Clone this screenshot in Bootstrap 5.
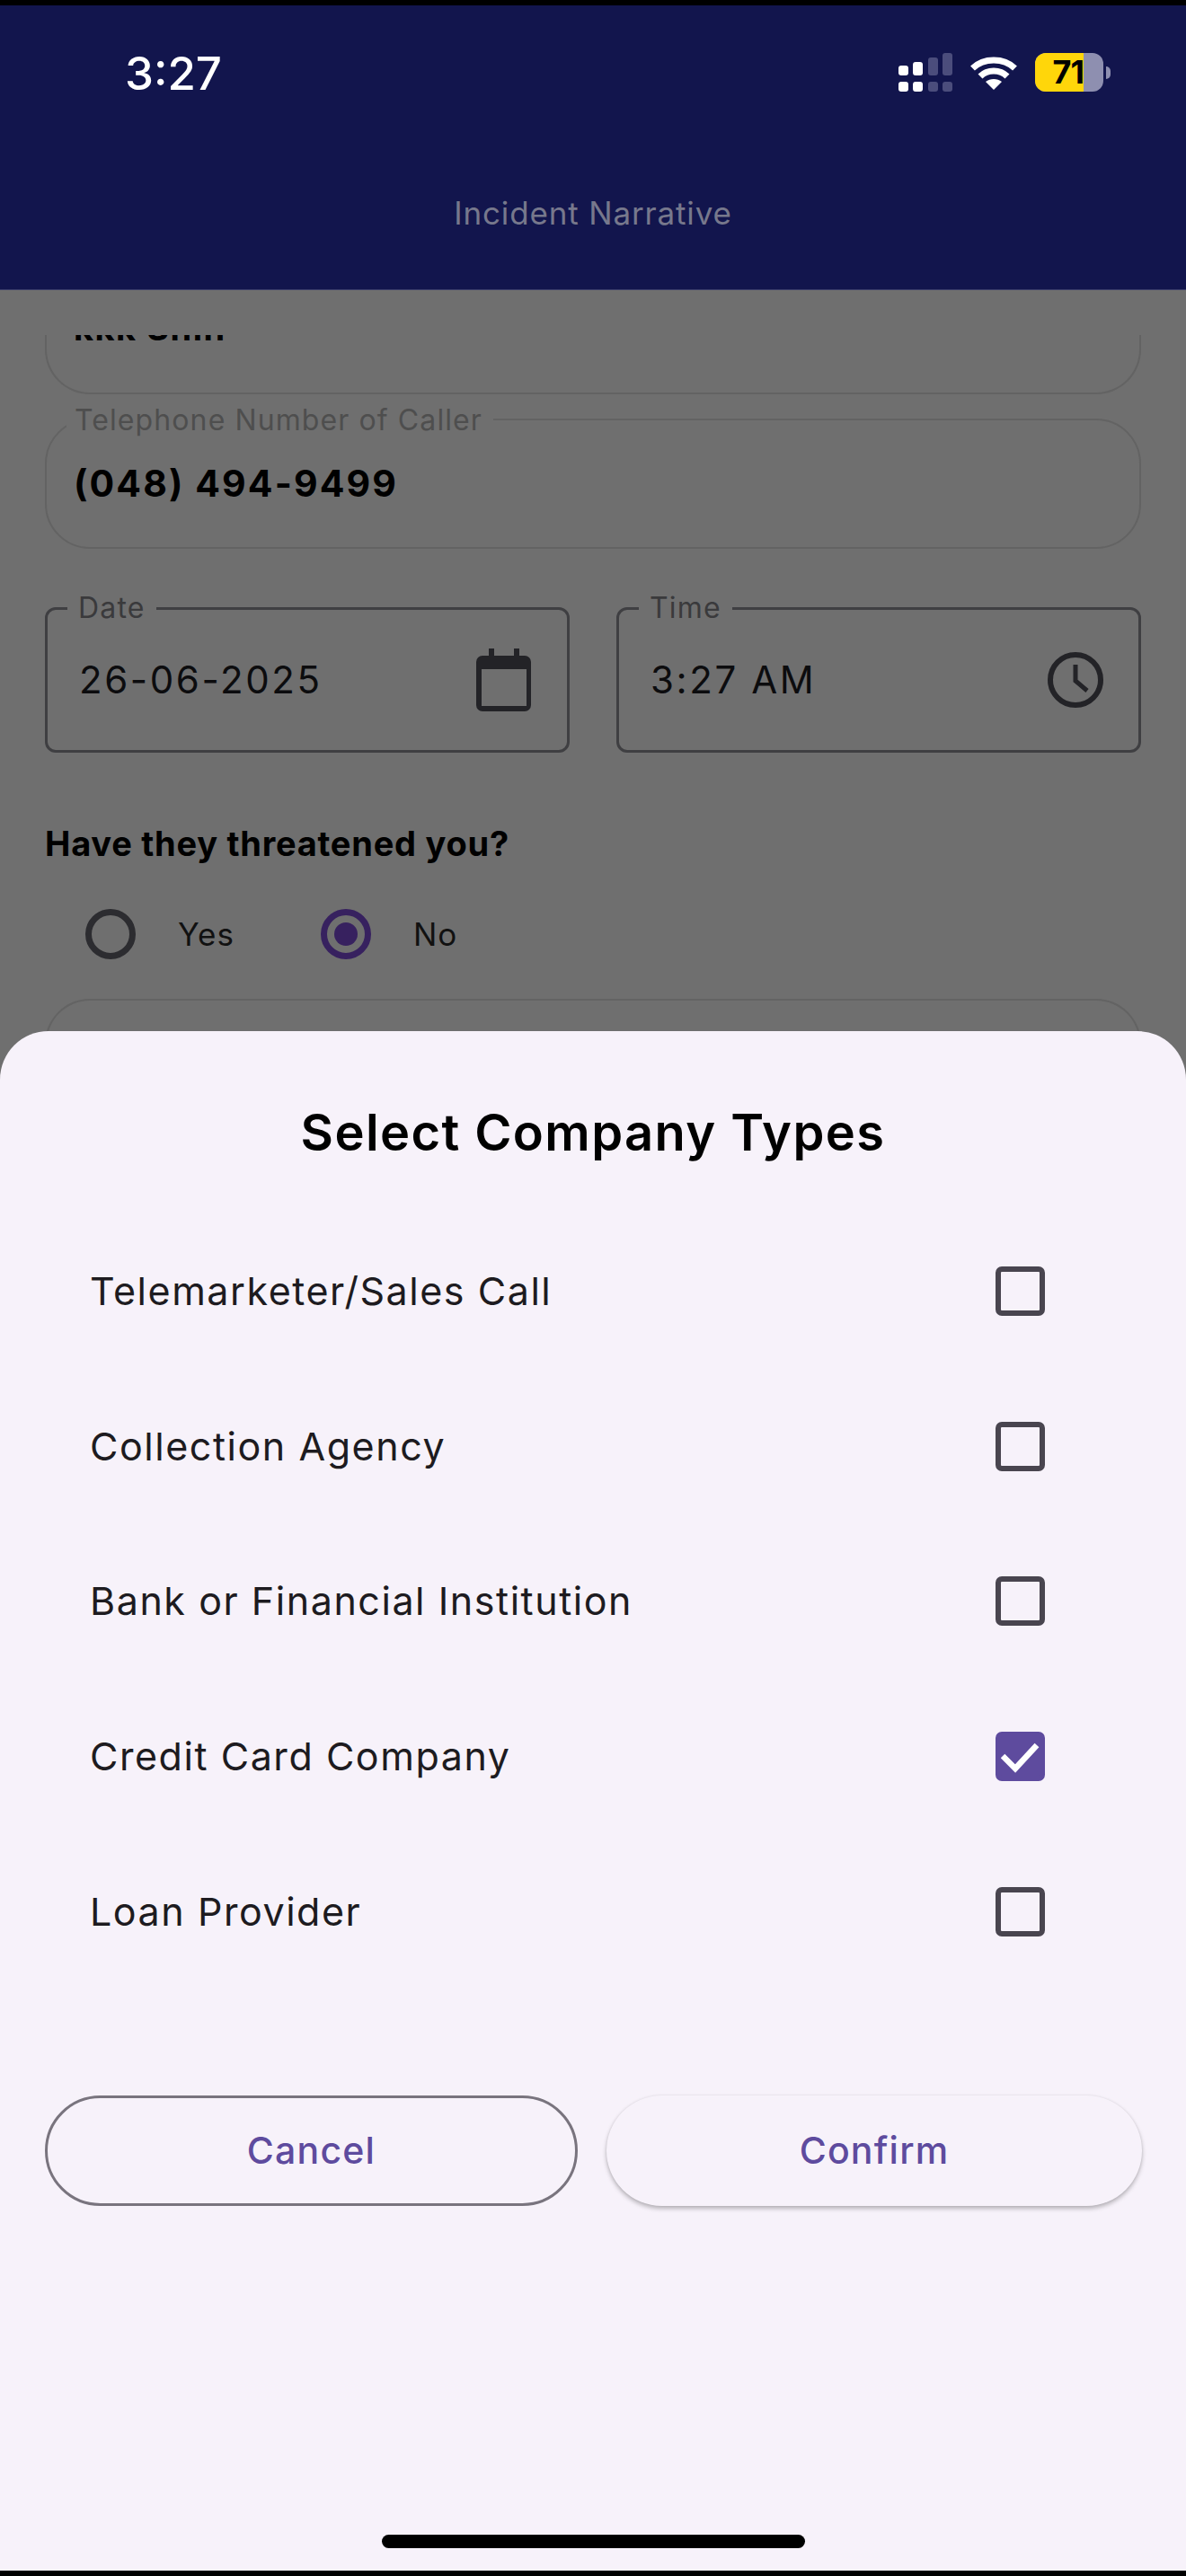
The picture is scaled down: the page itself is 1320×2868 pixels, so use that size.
<!DOCTYPE html>
<html lang="en">

<head>
    <meta charset="UTF-8">
    <meta name="viewport" content="width=device-width, initial-scale=1.0">
    <title>Incident Narrative</title>
    <link href="https://cdn.jsdelivr.net/npm/bootstrap@5.3.0/dist/css/bootstrap.min.css" rel="stylesheet">
    <style>
        html, body { margin: 0; height: 2868px; overflow: hidden; background: #000; }
        body { font-family: Inter, "Liberation Sans", sans-serif; }
        .phone { position: relative; width: 1320px; height: 2868px; background: #000; overflow: hidden; padding-top: 6px; }

        /* app bar */
        .app-head { height: 317px; background: #12154d; border-bottom: 1px solid #3a3d6b; position: relative; }
        .status-row { height: 148px; padding: 0 84px 0 139px; }
        .clock { color: #fff; font-size: 51px; font-weight: 500; line-height: 1; padding-top: 50px; }
        .status-icons { padding-top: 53px; gap: 20px; }
        .batt { width: 76px; height: 43px; border-radius: 12px; overflow: hidden; position: relative; background: #8e8fb0; }
        .batt-fill { position: absolute; left: 0; top: 0; bottom: 0; width: 54px; background: #ffd60a; }
        .batt-num { position: absolute; left: 0; width: 54px; text-align: right; top: 0; line-height: 43px; font-size: 36px; font-weight: 700; color: #000; letter-spacing: -1px; }
        .batt-tip { width: 5px; height: 14px; border-radius: 0 5px 5px 0; background: #8e8fb0; margin-left: 3px; }
        .app-title { text-align: center; color: #77788c; font-size: 35px; letter-spacing: .85px; line-height: 1; padding-top: 66px; }

        /* form behind the sheet */
        .form-area { height: 2539px; background: #6f6f6f; padding: 50px 50px 0 50px; }
        .clip-box { height: 66px; overflow: hidden; }
        .pill-field { display: flow-root; border: 2px solid #636363; border-top: 0; border-radius: 0 0 50px 50px; height: 66px; padding-left: 30px; }
        .cut-text { font-size: 38px; font-weight: 700; color: #000; line-height: 1; margin-top: -27px; letter-spacing: 1.5px; }
        .tel-field { position: relative; margin-top: 27px; height: 145px; border: 2px solid #636363; border-radius: 50px; padding: 0 30px; }
        .tel-label { position: absolute; left: 22px; top: -18px; background: #6f6f6f; padding: 0 12px 0 9px; color: #4e4e4e; font-size: 32px; line-height: 36px; letter-spacing: 1.1px; }
        .tel-value { font-size: 41px; font-weight: 700; color: #000; letter-spacing: 2.1px; line-height: 1; }
        .date-row { margin-top: 65px; gap: 52px; }
        .box-field { position: relative; flex: 1 1 0; height: 162px; border: 3px solid #3f3f42; border-radius: 12px; padding: 0 39px 0 35px; }
        .box-label { position: absolute; left: 22px; top: -20px; background: #6f6f6f; padding: 0 12px; color: #3a3a3c; font-size: 32px; line-height: 36px; letter-spacing: 1.2px; }
        .box-value { font-size: 42px; color: #0c0c0e; letter-spacing: 2.6px; line-height: 1; }
        .question { margin-top: 82px; font-size: 38px; font-weight: 700; color: #000; line-height: 1; letter-spacing: .75px; }
        .radio-row { margin-top: 54px; padding-left: 45px; height: 56px; }
        .radio-ring { width: 56px; height: 56px; border-radius: 50%; border: 7px solid #2c2c30; flex: none; }
        .radio-on { border-color: #37215f; display: flex; align-items: center; justify-content: center; }
        .radio-on i { display: block; width: 26px; height: 26px; border-radius: 50%; background: #37215f; }
        .radio-text { font-size: 35px; color: #111; letter-spacing: 1px; margin-left: 47px; line-height: 1; }
        .radio-gap { margin-left: 96px; }
        .radio-gap + .radio-text { margin-left: 47px; }
        .next-field { margin-top: 44px; height: 100px; border: 2px solid #636363; border-bottom: 0; border-radius: 50px 50px 0 0; }

        /* bottom sheet */
        .sheet { position: absolute; left: 0; right: 0; top: 1148px; bottom: 6px; background: #f7f2fa; border-radius: 54px 54px 0 0; }
        .sheet-title { margin: 0; padding-top: 83px; text-align: center; font-size: 56px; font-weight: 600; color: #000; line-height: 60px; letter-spacing: 1.4px; }
        .type-list { margin-top: 60px; padding: 0 157px 0 100px; }
        .type-row { height: 172.7px; font-size: 43px; color: #1d1b20; letter-spacing: 1.55px; }
        .tick-box { width: 55px; height: 55px; border: 6px solid #49454f; border-radius: 7px; flex: none; }
        .tick-on { background: #5e4b9e; border-color: #5e4b9e; }
        .sheet-btns { margin-top: 119px; padding: 0 49px 0 50px; gap: 32px; }
        .sheet-btn { flex: none; height: 123px; border-radius: 62px; background: #f7f2fa; color: #5e4b9e; font-size: 41px; font-weight: 500; letter-spacing: 1.2px; padding: 0; }
        .btn-line { width: 593px; border: 3px solid #79747e; }
        .btn-raise { width: 596px; border: 0; box-shadow: 0 3px 5px rgba(0, 0, 0, .26), 0 0 3px rgba(0, 0, 0, .08); }
        .home-bar { position: absolute; left: 425px; width: 471px; top: 1674px; height: 15px; border-radius: 8px; background: #000; }
    </style>
</head>

<body>
    <div class="phone">
        <!--barra superior-->
        <div class="app-head">
            <div class="status-row d-flex justify-content-between align-items-start">
                <div class="clock">3:27</div>
                <div class="status-icons d-flex align-items-center">
                    <svg width="60" height="43" viewBox="0 0 60 43">
                        <g fill="#fff">
                            <rect x="0" y="14" width="11" height="11" rx="3"/><rect x="16" y="10" width="11" height="15" rx="3"/>
                            <rect x="0" y="32" width="11" height="11" rx="3"/><rect x="16" y="32" width="11" height="11" rx="3"/>
                        </g>
                        <g fill="#4b4d7c">
                            <rect x="33" y="5" width="11" height="20" rx="3"/><rect x="49" y="0" width="11" height="25" rx="3"/>
                            <rect x="33" y="32" width="11" height="11" rx="3"/><rect x="49" y="32" width="11" height="11" rx="3"/>
                        </g>
                    </svg>
                    <svg width="52" height="38" viewBox="0 0 52 38">
                        <g fill="none" stroke="#fff" stroke-width="7">
                            <path d="M2.5 14C15 2 37 2 49.500 14"/>
                            <path d="M11 23C19 15 33 15 41 23"/>
                        </g>
                        <path d="M17 29C22 25 30 25 35 29L26 38Z" fill="#fff"/>
                    </svg>
                    <div class="d-flex align-items-center">
                        <div class="batt">
                            <div class="batt-fill"></div>
                            <div class="batt-num">71</div>
                        </div>
                        <div class="batt-tip"></div>
                    </div>
                </div>
            </div>
            <div class="app-title">Incident Narrative</div>
        </div>

        <!--formulario por tras-->
        <div class="form-area">
            <div class="clip-box">
                <div class="pill-field">
                    <div class="cut-text">kkk Shin</div>
                </div>
            </div>
            <div class="tel-field d-flex align-items-center">
                <span class="tel-label">Telephone Number of Caller</span>
                <span class="tel-value">(048) 494-9499</span>
            </div>
            <div class="date-row d-flex">
                <div class="box-field d-flex align-items-center justify-content-between">
                    <span class="box-label">Date</span>
                    <span class="box-value">26-06-2025</span>
                    <svg width="62" height="70" viewBox="0 0 62 70">
                        <path d="M14 0h6v8h22V0h6v8h6a7 7 0 0 1 7 7v48a7 7 0 0 1-7 7H7a7 7 0 0 1-7-7V15a7 7 0 0 1 7-7h7Z" fill="#232327"/>
                        <rect x="6" y="23" width="50" height="41" fill="#6f6f6f"/>
                    </svg>
                </div>
                <div class="box-field d-flex align-items-center justify-content-between">
                    <span class="box-label">Time</span>
                    <span class="box-value">3:27 AM</span>
                    <svg width="62" height="62" viewBox="0 0 62 62" fill="none" stroke="#232327">
                        <circle cx="31" cy="31" r="28" stroke-width="6"/>
                        <path d="M31 14v18l13 11" stroke-width="5"/>
                    </svg>
                </div>
            </div>
            <div class="question">Have they threatened you?</div>
            <div class="radio-row d-flex align-items-center">
                <div class="radio-ring"></div>
                <span class="radio-text">Yes</span>
                <div class="radio-ring radio-on radio-gap"><i></i></div>
                <span class="radio-text">No</span>
            </div>
            <div class="next-field"></div>
        </div>

        <!--folha de selecao-->
        <div class="sheet">
            <h2 class="sheet-title">Select Company Types</h2>
            <div class="type-list">
                <div class="type-row d-flex justify-content-between align-items-center">
                    <span>Telemarketer/Sales Call</span>
                    <div class="tick-box"></div>
                </div>
                <div class="type-row d-flex justify-content-between align-items-center">
                    <span>Collection Agency</span>
                    <div class="tick-box"></div>
                </div>
                <div class="type-row d-flex justify-content-between align-items-center">
                    <span>Bank or Financial Institution</span>
                    <div class="tick-box"></div>
                </div>
                <div class="type-row d-flex justify-content-between align-items-center">
                    <span>Credit Card Company</span>
                    <div class="tick-box tick-on d-flex align-items-center justify-content-center">
                        <svg width="43" height="43" viewBox="0 0 43 43"><path d="M2 21l14 14L40 9" fill="none" stroke="#fff" stroke-width="6.5"/></svg>
                    </div>
                </div>
                <div class="type-row d-flex justify-content-between align-items-center">
                    <span>Loan Provider</span>
                    <div class="tick-box"></div>
                </div>
            </div>
            <div class="sheet-btns d-flex">
                <button class="btn sheet-btn btn-line">Cancel</button>
                <button class="btn sheet-btn btn-raise">Confirm</button>
            </div>
            <div class="home-bar"></div>
        </div>
    </div>

    <script src="https://cdn.jsdelivr.net/npm/bootstrap@5.3.0/dist/js/bootstrap.bundle.min.js"></script>
</body>

</html>
